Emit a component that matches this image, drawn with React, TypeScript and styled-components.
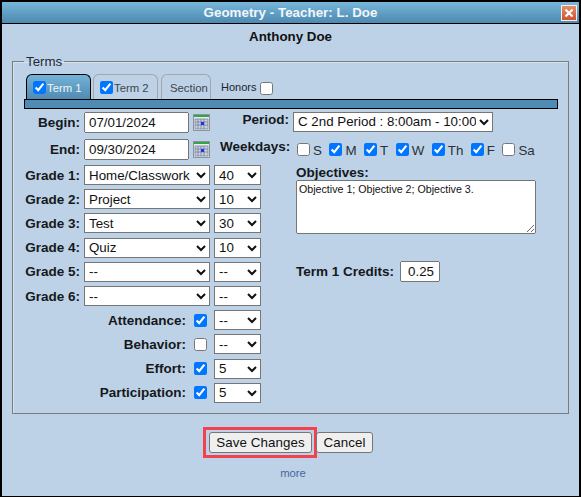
import React from "react";
import styled, { createGlobalStyle } from "styled-components";

const Global = createGlobalStyle`
  html, body { margin: 0; padding: 0; background: #bdd2e6; }
  body { font-family: "Liberation Sans", Arial, sans-serif; font-size: 13.33px; color: #111; }
`;

const Win = styled.div`
  box-sizing: border-box;
  width: 581px;
  height: 497px;
  border: solid #000;
  border-width: 2px 2px 1px 2px;
  background: #bdd2e6;
  display: flex;
  flex-direction: column;
`;
const TitleBar = styled.div`
  height: 21px;
  flex: none;
  display: flex;
  align-items: center;
  justify-content: center;
  position: relative;
  border-bottom: 1px solid #000;
  background: linear-gradient(#78b6da, #4d89b0);
`;
const Title = styled.div`
  color: #f2f6fa;
  font-weight: bold;
  font-size: 13.33px;
  letter-spacing: 0.03px;
`;
const CloseBtn = styled.div`
  position: absolute;
  right: 2px;
  top: 3px;
  width: 16px;
  height: 16px;
  line-height: 0;
`;
const Student = styled.div`
  text-align: center;
  font-weight: bold;
  font-size: 13.33px;
  height: 16px;
  margin-top: 5px;
`;
const Terms = styled.fieldset`
  box-sizing: border-box;
  margin: 9px 10px 0 10px;
  padding: 0 10px 0 11px;
  width: 557px;
  height: 360px;
  border: 1px solid #7c7c7c;
  box-shadow: 1px 1px 0 #d6e2ee inset;
`;
const TermsLegend = styled.legend`
  padding: 0 2px;
  margin-left: 0;
  font-size: 13.33px;
  color: #1b2a3a;
`;
const TabStrip = styled.div`
  display: flex;
  align-items: flex-end;
  height: 25px;
  margin-left: 2px;
  margin-top: 5px;
`;
const Tab = styled.div<{ $active?: boolean; $w: number; $gap: number; $pad: number }>`
  box-sizing: border-box;
  width: ${(p) => p.$w}px;
  margin-right: ${(p) => p.$gap}px;
  height: 25px;
  display: flex;
  align-items: center;
  padding-left: ${(p) => p.$pad}px;
  padding-top: 1px;
  gap: 1px;
  border: 1px solid ${(p) => (p.$active ? "#000" : "#a3a7ab")};
  border-bottom: none;
  border-radius: 6px 6px 0 0;
  font-size: 11.33px;
  color: ${(p) => (p.$active ? "#eef4f9" : "#3c4650")};
  background: ${(p) => (p.$active ? "linear-gradient(#74b2d7, #4f8bb2)" : "#bdd2e6")};
`;
const Box = styled.input.attrs({ type: "checkbox" })`
  width: 13px;
  height: 13px;
  margin: 0;
  flex: none;
`;
const HonorsLabel = styled.label`
  display: flex;
  align-items: center;
  gap: 4px;
  margin-left: 10px;
  height: 25px;
  font-size: 11px;
  color: #1a2430;
`;
const HonorsBox = styled(Box)`
  margin-top: 4px;
`;
const Bar = styled.div`
  box-sizing: border-box;
  height: 10px;
  width: 534px;
  background: #4f8cb3;
  border: 1px solid #000;
`;
const Columns = styled.div`
  display: flex;
`;
const Left = styled.div`
  width: 237px;
  flex: none;
`;
const Right = styled.div`
  margin-left: -41px;
  flex: 1;
`;
const DateRow = styled.div`
  display: flex;
  align-items: center;
  height: 27px;
`;
const GradeRow = styled.div`
  display: flex;
  align-items: center;
  height: 24.2px;
`;
const Label = styled.label<{ $w: number; $up?: boolean }>`
  width: ${(p) => p.$w}px;
  flex: none;
  text-align: right;
  font-weight: bold;
  font-size: 13.5px;
  color: #15181c;
  white-space: nowrap;
  margin-bottom: ${(p) => (p.$up ? 6 : 0)}px;
`;
const DateInput = styled.input`
  box-sizing: border-box;
  width: 105px;
  height: 21px;
  margin: 0 0 0 4px;
  padding: 1px 3px;
  font: 13.33px "Liberation Sans", Arial, sans-serif;
  color: #111;
`;
const CalIcon = styled.svg`
  margin-left: 4px;
  flex: none;
`;
const TypeSelect = styled.select`
  box-sizing: border-box;
  width: 126px;
  height: 20px;
  margin: 0 0 0 4px;
  font: 13.33px "Liberation Sans", Arial, sans-serif;
  color: #111;
  background: #fff;
`;
const WeightSelect = styled.select`
  box-sizing: border-box;
  width: 47px;
  height: 20px;
  margin: 0 0 0 4px;
  font: 13.33px "Liberation Sans", Arial, sans-serif;
  color: #111;
  background: #fff;
`;
const FlagBox = styled(Box)`
  margin: 0 3px 0 8px;
`;
const PeriodSelect = styled.select`
  box-sizing: border-box;
  width: 200px;
  height: 20px;
  margin: 0 0 2px 4px;
  font: 13.33px "Liberation Sans", Arial, sans-serif;
  color: #111;
  background: #fff;
`;
const Days = styled.div`
  display: flex;
  margin-left: 8px;
  gap: 7.5px;
`;
const Day = styled.label`
  display: flex;
  align-items: center;
  gap: 3px;
  font-size: 13.33px;
  color: #2a3138;
`;
const DayText = styled.span`
  padding-top: 2px;
`;
const ObjBlock = styled.div`
  margin: 3px 0 0 76px;
`;
const BoldLine = styled.div`
  font-weight: bold;
  font-size: 13.5px;
  color: #15181c;
  height: 14px;
  line-height: 14px;
`;
const Objectives = styled.textarea`
  display: block;
  box-sizing: border-box;
  width: 240px;
  height: 54px;
  margin: 0;
  padding: 2px;
  font: 10.67px "Liberation Sans", Arial, sans-serif;
  color: #111;
`;
const CreditsRow = styled.div`
  display: flex;
  align-items: center;
  margin-top: 27px;
  gap: 6px;
`;
const CreditsInput = styled.input`
  box-sizing: border-box;
  width: 40px;
  height: 21px;
  margin: 0;
  padding: 1px 2px 1px 6px;
  font: 13.33px "Liberation Sans", Arial, sans-serif;
  color: #111;
`;
const Actions = styled.div`
  display: flex;
  justify-content: center;
  align-items: center;
  margin-top: 13px;
  margin-right: 5px;
`;
const Highlight = styled.div`
  border: 3px solid #f4404f;
  padding: 2px 2px 2px 3px;
  line-height: 0;
  margin-right: -1px;
`;
const Btn = styled.button<{ $w: number }>`
  box-sizing: border-box;
  width: ${(p) => p.$w}px;
  height: 21px;
  margin: 0;
  padding: 0;
  font: 13.33px "Liberation Sans", Arial, sans-serif;
  letter-spacing: 0.1px;
  color: #111;
  background: #efefef;
  border: 1px solid #767676;
  border-radius: 3px;
`;
const More = styled.div`
  text-align: center;
  margin: 9px 0 0 5px;
  font-size: 11.3px;
  color: #44689c;
`;

const Calendar = () => (
  <CalIcon width="17" height="17" viewBox="0 0 17 17">
    <rect x="0.5" y="0.5" width="16" height="16" fill="#e8ecee" stroke="#8d9499" />
    <rect x="1" y="1" width="15" height="2" fill="#35a34a" />
    <rect x="2" y="5" width="13" height="10" fill="#c9d2e2" stroke="#5a6888" strokeWidth="0.6" />
    <path d="M2 8h13M2 11h13M5 5v10M8 5v10M11 5v10" stroke="#6a7288" strokeWidth="0.7" fill="none" />
    <rect x="8" y="8" width="3" height="3" fill="#1438e8" />
  </CalIcon>
);

const Opt = ({ v }: { v: string }) => <option>{v}</option>;

const grades: [string, string][] = [
  ["Home/Classwork", "40"],
  ["Project", "10"],
  ["Test", "30"],
  ["Quiz", "10"],
  ["--", "--"],
  ["--", "--"],
];
const flags: [string, boolean, string][] = [
  ["Attendance:", true, "--"],
  ["Behavior:", false, "--"],
  ["Effort:", true, "5"],
  ["Participation:", true, "5"],
];
const days: [string, boolean][] = [
  ["S", false],
  ["M", true],
  ["T", true],
  ["W", true],
  ["Th", true],
  ["F", true],
  ["Sa", false],
];

export default function App() {
  return (
    <Win>
      <Global />
      <TitleBar>
        <Title>Geometry - Teacher: L. Doe</Title>
        <CloseBtn>
          <svg width="16" height="16" viewBox="0 0 16 16">
            <defs>
              <linearGradient id="cl" x1="0" y1="0" x2="0" y2="1">
                <stop offset="0" stopColor="#e8906a" />
                <stop offset="1" stopColor="#d0502c" />
              </linearGradient>
            </defs>
            <rect x="0.5" y="0.5" width="15" height="15" fill="url(#cl)" stroke="#f0f0f0" />
            <path d="M4.5 4.5l7 7M11.5 4.5l-7 7" stroke="#fff" strokeWidth="2.2" />
          </svg>
        </CloseBtn>
      </TitleBar>
      <Student>Anthony Doe</Student>
      <Terms>
        <TermsLegend>Terms</TermsLegend>
        <TabStrip>
          <Tab $active $w={65} $gap={2} $pad={6}>
            <Box defaultChecked />
            Term 1
          </Tab>
          <Tab $w={65} $gap={3} $pad={6}>
            <Box defaultChecked />
            Term 2
          </Tab>
          <Tab $w={50} $gap={0} $pad={8}>
            <span>Section</span>
          </Tab>
          <HonorsLabel>
            Honors
            <HonorsBox />
          </HonorsLabel>
        </TabStrip>
        <Bar />
        <Columns>
          <Left>
            <DateRow>
              <Label $w={56}>Begin:</Label>
              <DateInput defaultValue="07/01/2024" />
              <Calendar />
            </DateRow>
            <DateRow>
              <Label $w={56}>End:</Label>
              <DateInput defaultValue="09/30/2024" />
              <Calendar />
            </DateRow>
            {grades.map(([t, w], i) => (
              <GradeRow key={i}>
                <Label $w={56}>Grade {i + 1}:</Label>
                <TypeSelect defaultValue={t}>
                  <Opt v={t} />
                </TypeSelect>
                <WeightSelect defaultValue={w}>
                  <Opt v={w} />
                </WeightSelect>
              </GradeRow>
            ))}
            {flags.map(([n, c, w]) => (
              <GradeRow key={n}>
                <Label $w={162}>{n}</Label>
                <FlagBox defaultChecked={c} />
                <WeightSelect defaultValue={w}>
                  <Opt v={w} />
                </WeightSelect>
              </GradeRow>
            ))}
          </Left>
          <Right>
            <DateRow>
              <Label $w={69} $up>Period:</Label>
              <PeriodSelect defaultValue="p">
                <option value="p">C 2nd Period : 8:00am - 10:00am</option>
              </PeriodSelect>
            </DateRow>
            <DateRow>
              <Label $w={69} $up>Weekdays:</Label>
              <Days>
                {days.map(([d, c]) => (
                  <Day key={d}>
                    <Box defaultChecked={c} />
                    <DayText>{d}</DayText>
                  </Day>
                ))}
              </Days>
            </DateRow>
            <ObjBlock>
              <BoldLine>Objectives:</BoldLine>
              <Objectives defaultValue="Objective 1; Objective 2; Objective 3." />
              <CreditsRow>
                <BoldLine>Term 1 Credits:</BoldLine>
                <CreditsInput defaultValue="0.25" />
              </CreditsRow>
            </ObjBlock>
          </Right>
        </Columns>
      </Terms>
      <Actions>
        <Highlight>
          <Btn $w={103}>Save Changes</Btn>
        </Highlight>
        <Btn $w={57}>Cancel</Btn>
      </Actions>
      <More>more</More>
    </Win>
  );
}
